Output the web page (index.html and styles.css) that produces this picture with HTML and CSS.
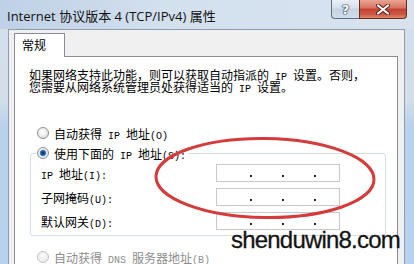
FILE: index.html
```html
<!DOCTYPE html>
<html lang="zh-CN">
<head>
<meta charset="utf-8">
<title>Internet 协议版本 4 (TCP/IPv4) 属性</title>
<link rel="stylesheet" href="styles.css">
</head>
<body>
<div class="window">
  <div class="titlebar">
    <span class="title">Internet 协议版本 4 (TCP/IPv4) 属性</span>
    <div class="caption-btns">
      <div class="cbtn help">?</div>
      <div class="cbtn close">
        <svg width="14" height="11" viewBox="0 0 14 11">
          <path d="M2 1.5 L12 9.5 M12 1.5 L2 9.5" stroke="#5a1e18" stroke-width="4" stroke-linecap="round"/>
          <path d="M2 1.5 L12 9.5 M12 1.5 L2 9.5" stroke="#ffffff" stroke-width="2.2" stroke-linecap="round"/>
        </svg>
      </div>
    </div>
  </div>
  <div class="client">
    <div class="tabs"><div class="tab">常规</div></div>
    <div class="panel">
      <p class="intro"><span class="line">如果网络支持此功能，则可以获取自动指派的<span class="en"> IP </span>设置。否则，</span><span class="line">您需要从网络系统管理员处获得适当的<span class="en"> IP </span>设置。</span></p>
      <div class="radio-row first"><span class="radio"></span><span>自动获得<span class="en"> IP </span>地址<span class="en">(O)</span></span></div>
      <fieldset class="group">
        <legend class="radio-row legend"><span class="radio checked"></span><span>使用下面的<span class="en"> IP </span>地址<span class="en">(S):</span></span></legend>
        <div class="field"><span class="label"><span class="en">IP </span>地址<span class="en">(I):</span></span><span class="ipbox"><i></i><i></i><i></i></span></div>
        <div class="field"><span class="label">子网掩码<span class="en">(U):</span></span><span class="ipbox"><i></i><i></i><i></i></span></div>
        <div class="field"><span class="label">默认网关<span class="en">(D):</span></span><span class="ipbox"><i></i><i></i><i></i></span></div>
      </fieldset>
      <div class="radio-row disabled"><span class="radio"></span><span>自动获得<span class="en"> DNS </span>服务器地址<span class="en">(B)</span></span></div>
    </div>
  </div>
  <svg class="mark" width="230" height="90" viewBox="0 0 230 90">
    <ellipse cx="113" cy="43" rx="109" ry="39.5" fill="none" stroke="#d63b3b" stroke-width="3" transform="rotate(0.8 113 43)"/>
  </svg>
  <div class="watermark">shenduwin8.com</div>
</div>
</body>
</html>
```
FILE: styles.css
```css
* { box-sizing: border-box; }
html, body { margin: 0; padding: 0; }
body {
  width: 414px;
  height: 264px;
  overflow: hidden;
  font-family: "Noto Sans CJK SC", "Noto Sans", sans-serif;
  font-size: 12px;
  color: #000;
  text-spacing-trim: space-all;
}
.window {
  position: relative;
  width: 414px;
  height: 264px;
  display: flex;
  flex-direction: column;
  overflow: hidden;
  background: linear-gradient(to bottom, #c9d8ea 0, #d3dfed 28px, #d4dee9 100px, #b9d1ec 125px, #b7d2ef 100%);
}
.titlebar {
  height: 29px;
  flex: none;
  display: flex;
  align-items: center;
  padding-left: 7px;
  background: linear-gradient(to right, #bfd1e6 0, #d3e0ee 40%, #d8e3ef 100%);
}
.title {
  font-family: "Open Sans", "Noto Sans CJK SC", sans-serif;
  font-size: 13px;
  color: #111;
  white-space: nowrap;
  margin-top: 1px;
}
.caption-btns {
  margin-left: auto;
  margin-right: 7px;
  align-self: flex-start;
  display: flex;
  height: 19px;
}
.cbtn {
  height: 19px;
  display: flex;
  align-items: center;
  justify-content: center;
  border: 1px solid #5f6f84;
  border-top: none;
}
.help {
  width: 28px;
  border-right: none;
  border-bottom-left-radius: 4px;
  background: linear-gradient(to bottom, #e9eff6 0, #d6e0eb 45%, #c5d3e2 50%, #d2deea 100%);
  font-family: "DejaVu Sans", sans-serif;
  font-weight: bold;
  font-size: 13px;
  color: #fff;
  text-shadow: 0 0 1px #27364a, 0 0 1px #27364a, 0 0 2px #27364a;
}
.close {
  width: 48px;
  border-bottom-right-radius: 4px;
  border-color: #6b2a22;
  background: linear-gradient(to bottom, #e9a595 0, #d8725f 45%, #c2402f 50%, #cc5a45 80%, #dd8a6f 100%);
}
.client {
  flex: 1;
  margin: 0 9px 0 8px;
  background: #f0f0f0;
  border: 1px solid #8c9db0;
  border-bottom: none;
  padding: 3px 6px 0 5px;
  display: flex;
  flex-direction: column;
}
.tabs {
  display: flex;
  height: 23px;
  position: relative;
  z-index: 1;
}
.tab {
  width: 51px;
  height: 24px;
  background: #fff;
  border: 1px solid #898c95;
  border-bottom: none;
  padding-left: 7px;
  line-height: 22px;
  font-size: 12px;
}
.panel {
  flex: 1;
  background: #fff;
  border: 1px solid #898c95;
  border-bottom: none;
  padding: 12px 0 0 14px;
}
.en {
  font-family: "Liberation Mono", "DejaVu Sans Mono", monospace;
  font-size: 10px;
}
.intro {
  margin: 0;
  font-size: 12px;
  white-space: nowrap;
}
.intro .line {
  display: block;
  height: 12px;
  line-height: 12px;
}
.radio-row {
  display: flex;
  align-items: center;
  height: 16px;
  gap: 5px;
  white-space: nowrap;
  margin-left: 8px;
}
.radio-row.first { margin-top: 32px; }
.radio {
  width: 12px;
  height: 12px;
  border-radius: 50%;
  border: 1px solid #8e8f8f;
  background: radial-gradient(circle at 45% 40%, #ffffff 0, #f1f1f1 40%, #d4d4d4 100%);
  flex: none;
}
.radio.checked {
  background:
    radial-gradient(circle at 50% 50%, #0e2c52 0, #1e5aa3 2px, #4c91d8 3px, rgba(76,145,216,0) 3.6px),
    radial-gradient(circle at 45% 40%, #ffffff 0, #f1f1f1 40%, #d4d4d4 100%);
}
.group {
  margin: 4px 0 0 1px;
  width: 356px;
  border: 1px solid #d5dfe5;
  border-radius: 3px;
  padding: 0 0 5px 10px;
  min-width: 0;
}
.legend {
  margin-left: -5px;
  padding: 0 2px 0 1px;
  background: #fff;
}
.field {
  display: flex;
  align-items: center;
  height: 18px;
  margin-top: 6px;
}
.field:first-of-type { margin-top: 3px; }
.label {
  width: 175px;
  flex: none;
  white-space: nowrap;
  padding-top: 1px;
}
.ipbox {
  width: 124px;
  height: 18px;
  border: 1px solid #c5c8cc;
  background: #fff;
  display: flex;
  padding-left: 33px;
  gap: 30px;
  align-items: flex-end;
  padding-bottom: 4px;
}
.ipbox i {
  width: 2px;
  height: 2px;
  background: #222;
  flex: none;
}
.radio-row.disabled {
  margin-top: 13px;
  color: #8d8d8d;
}
.radio-row.disabled .radio {
  border-color: #c2c2c2;
  background: radial-gradient(circle at 45% 40%, #fafafa 0, #eeeeee 60%, #e0e0e0 100%);
}
.mark {
  position: absolute;
  left: 152px;
  top: 135px;
}
.watermark {
  position: absolute;
  left: 231px;
  top: 228px;
  font-family: "Liberation Sans", Arial, sans-serif;
  font-size: 24px;
  line-height: 24px;
  letter-spacing: -0.8px;
  color: #141414;
  -webkit-text-stroke: 0.3px #141414;
  white-space: nowrap;
}
```
